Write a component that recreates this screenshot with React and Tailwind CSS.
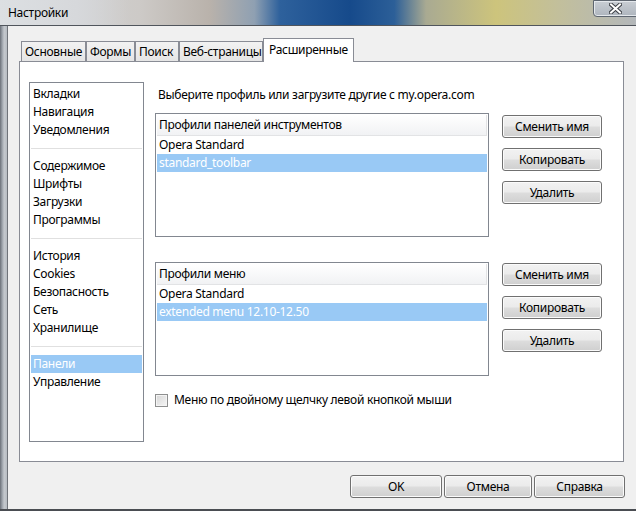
import React from 'react';

const sideGroups = [
  ['Вкладки', 'Навигация', 'Уведомления'],
  ['Содержимое', 'Шрифты', 'Загрузки', 'Программы'],
  ['История', 'Cookies', 'Безопасность', 'Сеть', 'Хранилище'],
  ['Панели', 'Управление'],
];

const tabs = [
  { label: 'Основные', w: 'w-[65px]' },
  { label: 'Формы', w: 'w-[49px]' },
  { label: 'Поиск', w: 'w-[44px]' },
  { label: 'Веб-страницы', w: 'w-[84px]' },
];

function WinButton({ children, className = '' }) {
  return (
    <button
      className={`h-[23px] rounded-[3px] border border-[#707070] bg-[linear-gradient(to_bottom,#f2f2f2_0%,#ebebeb_48%,#dddddd_52%,#cfcfcf_100%)] shadow-[inset_0_0_0_1px_#fbfbfb] text-black leading-none flex items-center justify-center ${className}`}
    >
      {children}
    </button>
  );
}

function ProfileList({ title, items, selected, height }) {
  return (
    <div className={`w-[334px] ${height} border border-[#828790] bg-white p-px`}>
      <div className="h-[21px] flex items-center pl-[2px] bg-[linear-gradient(to_bottom,#ffffff,#f1f2f4)] border-b border-[#e2e3e5] border-r">
        {title}
      </div>
      {items.map((it) => (
        <div
          key={it}
          className={`h-[18px] flex items-center pl-[2px] ${it === selected ? 'bg-[#99c9f5] text-white' : ''}`}
        >
          {it}
        </div>
      ))}
    </div>
  );
}

function ButtonStack() {
  return (
    <div className="flex flex-col gap-[10px] mt-[2px]">
      <WinButton className="w-[100px]">Сменить имя</WinButton>
      <WinButton className="w-[100px]">Копировать</WinButton>
      <WinButton className="w-[100px]">Удалить</WinButton>
    </div>
  );
}

export default function App() {
  return (
    <div className="w-[636px] h-[511px] overflow-hidden flex flex-col text-[12px] tracking-[-0.3px] text-black font-['Segoe_UI','Noto_Sans',sans-serif]">
      {/* title bar, aero glass */}
      <div className="h-[25px] flex items-start justify-between bg-[linear-gradient(to_right,#d3d6da_0%,#cdcac7_22%,#b9b2ab_33%,#8fa0b2_40%,#2e619c_44%,#164a8b_55%,#2c5f98_62%,#a9aa92_67%,#cdc47c_78%,#c2bf9c_88%,#b3b7ba_100%)]">
        <div className="h-full flex items-center pl-[8px] bg-[linear-gradient(to_right,#dcdfe2_0%,#d6d8db_60%,transparent_100%)] pr-[60px]">
          Настройки
        </div>
        <div className="w-[45px] h-[17px] mr-[-2px] rounded-bl-[4px] border border-[#5e6670] bg-[linear-gradient(to_bottom,#c9ced4,#aeb5bd)] shadow-[inset_0_0_0_1px_#e4e8ec] flex items-center justify-center">
          <svg width="13" height="11" viewBox="0 0 13 11">
            <path d="M2 1.5 L11 9.5 M11 1.5 L2 9.5" stroke="#3b3f45" strokeWidth="4" strokeLinecap="square" />
            <path d="M2 1.5 L11 9.5 M11 1.5 L2 9.5" stroke="#ffffff" strokeWidth="2" strokeLinecap="square" />
          </svg>
        </div>
      </div>
      <div className="h-px bg-[#50555c]" />

      <div className="flex flex-1">
        <div className="w-[7px] bg-[linear-gradient(to_right,#6b7078_0%,#9aa0a8_30%,#c4c8cd_60%,#b7bcc2_100%)]" />
        <div className="w-px bg-[#6f7379]" />

        <div className="flex-1 flex flex-col bg-[#f0f0f0] pl-[11px] pt-[12px]">
          {/* tabs */}
          <div className="flex items-end h-[23px] pl-[2px]">
            {tabs.map((t) => (
              <div
                key={t.label}
                className={`${t.w} h-[20px] border border-b-0 border-[#898c95] bg-[linear-gradient(to_bottom,#f2f2f2,#e5e5e5)] flex items-center pl-[3px] whitespace-nowrap`}
              >
                {t.label}
              </div>
            ))}
            <div className="w-[91px] h-[24px] -mb-px relative z-10 border border-b-0 border-[#898c95] bg-white flex items-center pl-[5px] pb-[2px]">
              Расширенные
            </div>
          </div>

          {/* tab page */}
          <div className="w-[605px] h-[401px] border border-[#898c95] bg-white flex pl-[9px] pt-[20px]">
            <div className="w-[115px] h-[360px] border border-[#828790] bg-white pt-[2px]">
              {sideGroups.map((g, gi) => (
                <div key={gi}>
                  {gi > 0 && (
                    <div className="h-[18px] flex items-center mx-px">
                      <div className="h-px w-full bg-[#e0e0e0]" />
                    </div>
                  )}
                  {g.map((it) => (
                    <div
                      key={it}
                      className={`h-[18px] mx-px pl-[2px] flex items-center ${it === 'Панели' ? 'bg-[#99c9f5] text-white' : ''}`}
                    >
                      {it}
                    </div>
                  ))}
                </div>
              ))}
            </div>

            <div className="ml-[11px] pt-[5px] flex flex-col">
              <div className="h-[16px] leading-[16px] pl-[3px]">
                Выберите профиль или загрузите другие с my.opera.com
              </div>
              <div className="flex gap-[13px] mt-[10px]">
                <ProfileList
                  title="Профили панелей инструментов"
                  items={['Opera Standard', 'standard_toolbar']}
                  selected="standard_toolbar"
                  height="h-[124px]"
                />
                <ButtonStack />
              </div>
              <div className="flex gap-[13px] mt-[25px]">
                <ProfileList
                  title="Профили меню"
                  items={['Opera Standard', 'extended menu 12.10-12.50']}
                  selected="extended menu 12.10-12.50"
                  height="h-[114px]"
                />
                <div className="-mt-px">
                  <ButtonStack />
                </div>
              </div>
              <label className="flex items-center mt-[15px] gap-[6px]">
                <span className="w-[13px] h-[13px] border border-[#8e8f8f] bg-[linear-gradient(135deg,#d6d6d6,#f6f6f6)] shadow-[inset_0_0_0_1px_#f4f4f4]" />
                <span>Меню по двойному щелчку левой кнопкой мыши</span>
              </label>
            </div>
          </div>

          {/* dialog buttons */}
          <div className="flex justify-end gap-[2px] mt-[13px] pr-[11px]">
            <WinButton className="w-[92px]">OK</WinButton>
            <WinButton className="w-[88px]">Отмена</WinButton>
            <WinButton className="w-[91px]">Справка</WinButton>
          </div>
        </div>
      </div>
      <div className="h-[2px] bg-[#4a4d52]" />
    </div>
  );
}
